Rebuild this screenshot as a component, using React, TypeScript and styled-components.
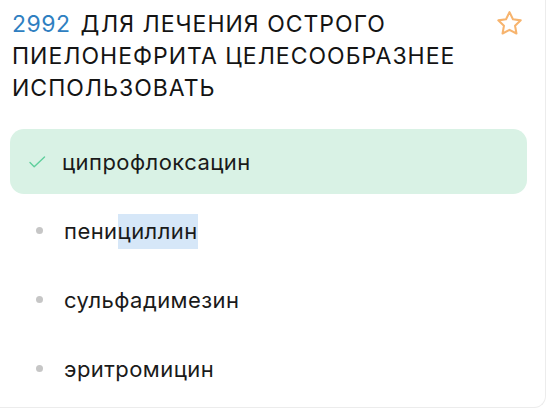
import React from "react";
import styled, { createGlobalStyle } from "styled-components";

const Global = createGlobalStyle`
  html, body {
    margin: 0;
    padding: 0;
    background: #ffffff;
  }
  body {
    font-family: Inter, "Noto Sans", "DejaVu Sans", sans-serif;
    -webkit-font-smoothing: antialiased;
  }
`;

const Card = styled.div`
  box-sizing: border-box;
  width: 546px;
  height: 408px;
  border-right: 1px solid #ececec;
  border-bottom: 1px solid #ececec;
  border-bottom-right-radius: 12px;
  padding: 8px 18px 0 10px;
  background: #ffffff;
`;

const Header = styled.div`
  display: flex;
  align-items: flex-start;
  justify-content: space-between;
  padding-left: 2px;
`;

const Title = styled.h2`
  margin: 0;
  font-size: 23px;
  line-height: 32px;
  font-weight: 400;
  letter-spacing: 1px;
  color: #141414;
  max-width: 475px;
`;

const Num = styled.span`
  color: #2f7fc1;
  letter-spacing: 0.5px;
  margin-right: 10px;
`;

const StarButton = styled.button`
  border: 0;
  background: none;
  padding: 0;
  margin: 0 3px 0 0;
  width: 30px;
  height: 30px;
  display: flex;
  align-items: center;
  justify-content: center;
  cursor: pointer;
`;

const Options = styled.ul`
  list-style: none;
  margin: 25px 0 0;
  padding: 0;
  display: flex;
  flex-direction: column;
  gap: 4px;
`;

const Option = styled.li<{ $correct?: boolean }>`
  display: flex;
  align-items: center;
  gap: 13px;
  height: 65px;
  padding-left: 19px;
  border-radius: 14px;
  background: ${(p) => (p.$correct ? "#d9f2e5" : "transparent")};
`;

const Marker = styled.span`
  width: 20px;
  height: 20px;
  display: flex;
  align-items: center;
  justify-content: center;
  flex-shrink: 0;
`;

const Dot = styled.span`
  width: 7px;
  height: 7px;
  border-radius: 50%;
  background: #c6c6c6;
`;

const Label = styled.span<{ $shift?: number }>`
  font-size: 22px;
  line-height: 32px;
  letter-spacing: 0.45px;
  color: #1a1a1a;
  margin-left: ${(p) => p.$shift ?? 0}px;
`;

const Selected = styled.span`
  background: #d6e7f8;
  padding: 4px 0 5px;
`;

const StarIcon = () => (
  <svg width="29" height="29" viewBox="0 0 24 24" fill="none">
    <path
      d="M12 2.6l2.85 5.9 6.45.9-4.7 4.5 1.15 6.4L12 17.25 6.25 20.3l1.15-6.4-4.7-4.5 6.45-.9z"
      stroke="#f7b46e"
      strokeWidth="1.7"
      strokeLinejoin="round"
    />
  </svg>
);

const CheckIcon = () => (
  <svg width="20" height="20" viewBox="0 0 20 20" fill="none">
    <path
      d="M1 10.5l4.2 4.2L15.5 5"
      stroke="#5fcf9c"
      strokeWidth="1.4"
      strokeLinecap="round"
      strokeLinejoin="round"
    />
  </svg>
);

export default function App() {
  return (
    <>
      <Global />
      <Card>
        <Header>
          <Title>
            <Num>2992</Num>ДЛЯ ЛЕЧЕНИЯ ОСТРОГО ПИЕЛОНЕФРИТА ЦЕЛЕСООБРАЗНЕЕ
            ИСПОЛЬЗОВАТЬ
          </Title>
          <StarButton aria-label="В избранное">
            <StarIcon />
          </StarButton>
        </Header>
        <Options>
          <Option $correct>
            <Marker>
              <CheckIcon />
            </Marker>
            <Label>ципрофлоксацин</Label>
          </Option>
          <Option>
            <Marker>
              <Dot />
            </Marker>
            <Label $shift={2}>
              пени<Selected>циллин</Selected>
            </Label>
          </Option>
          <Option>
            <Marker>
              <Dot />
            </Marker>
            <Label $shift={2}>сульфадимезин</Label>
          </Option>
          <Option>
            <Marker>
              <Dot />
            </Marker>
            <Label $shift={2}>эритромицин</Label>
          </Option>
        </Options>
      </Card>
    </>
  );
}
